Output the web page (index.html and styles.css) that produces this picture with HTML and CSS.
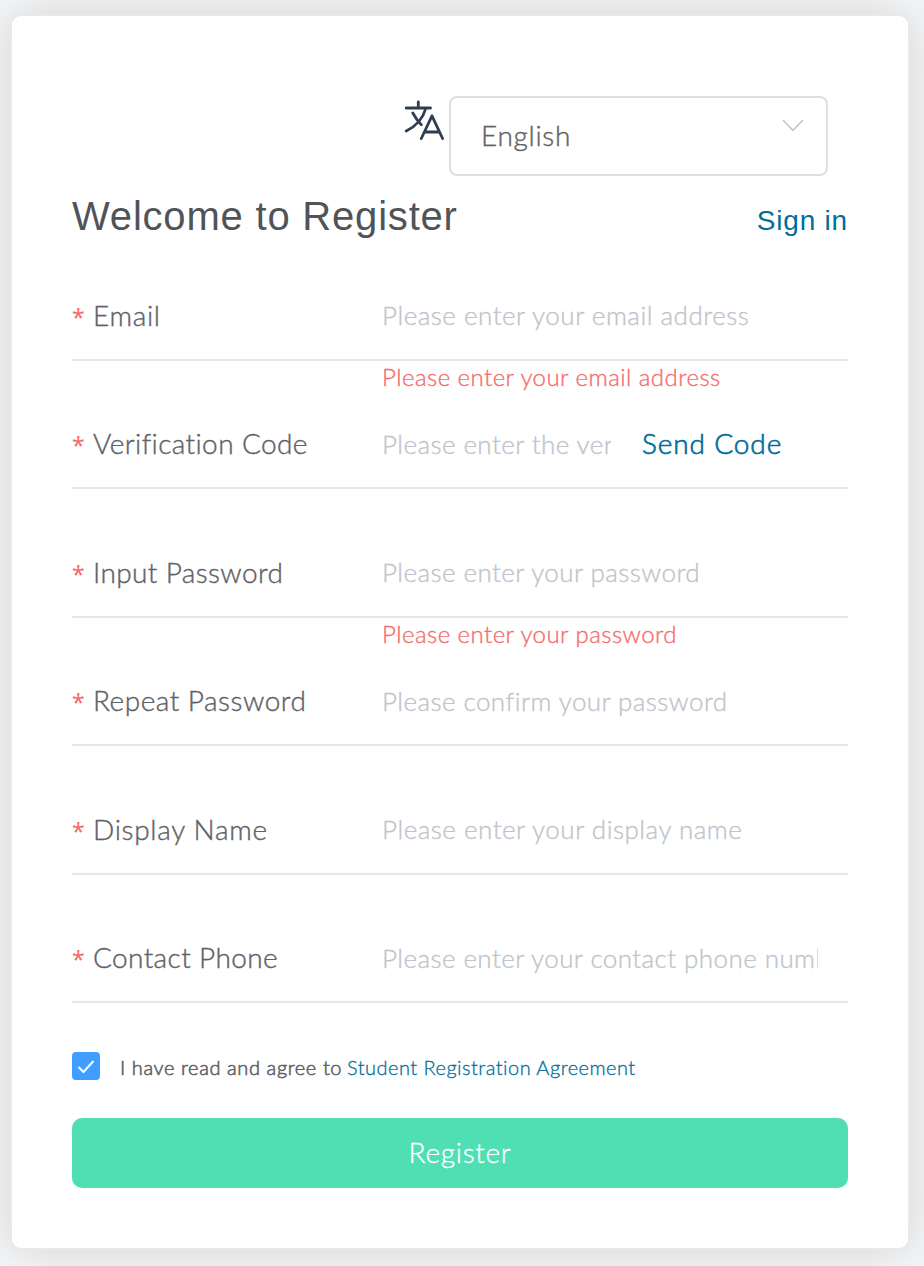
FILE: index.html
```
<!DOCTYPE html>
<html lang="en">
<head>
<meta charset="utf-8">
<title>Register</title>
<link rel="stylesheet" href="styles.css">
</head>
<body>
<main class="card">
  <div class="language">
    <svg class="language-icon" viewBox="0 0 40 40" width="40" height="40"><path d="M2.200 8H26.500M14.300 2V8M21.700 8.500C19 18.500 11.500 26.500 2.200 31M8.800 13C11.500 18 14 21.500 17.300 24.800M17.300 38.500L28 15.800L38.600 38.500M20.500 32H35.500"/></svg>
    <div class="select"><span class="select-value">English</span>
      <svg class="select-arrow" viewBox="0 0 22 13" width="22" height="13"><path d="M1 1L11 11.300L21 1"/></svg>
    </div>
  </div>
  <header class="heading"><h1 class="title">Welcome to Register</h1><a class="signin">Sign in</a></header>
  <form class="form">
    <div class="item"><div class="row"><label class="label email"><span class="star">*</span>Email</label><input class="input" placeholder="Please enter your email address"></div><p class="error">Please enter your email address</p></div>
    <div class="item"><div class="row"><label class="label"><span class="star">*</span>Verification Code</label><input class="input short" placeholder="Please enter the verification code"><a class="send">Send Code</a></div><p class="error"></p></div>
    <div class="item"><div class="row"><label class="label"><span class="star">*</span>Input Password</label><input class="input password" placeholder="Please enter your password"></div><p class="error">Please enter your password</p></div>
    <div class="item"><div class="row"><label class="label repeat"><span class="star">*</span>Repeat Password</label><input class="input password" placeholder="Please confirm your password"></div><p class="error"></p></div>
    <div class="item"><div class="row"><label class="label display"><span class="star">*</span>Display Name</label><input class="input" placeholder="Please enter your display name"></div><p class="error"></p></div>
    <div class="item"><div class="row"><label class="label"><span class="star">*</span>Contact Phone</label><input class="input contact" placeholder="Please enter your contact phone number"></div><p class="error"></p></div>
    <div class="agree"><span class="checkbox"><svg viewBox="0 0 28 28" width="28" height="28"><path d="M6.500 15L11.500 20L21.500 9"/></svg></span><span class="agree-text">I have read and agree to</span><a class="agreement">Student Registration Agreement</a></div>
    <button class="submit" type="button">Register</button>
  </form>
</main>
</body>
</html>
```
FILE: styles.css
```
* { box-sizing: border-box; }
body { margin: 0; padding: 16px 16px 18px 12px; background: #f4f5f6; font-family: Lato, "Open Sans", sans-serif; font-weight: 300; overflow: hidden; }
.card { height: 1232px; padding: 80px 60px 60px; background: #fff; border-radius: 9px; box-shadow: 0 0 0 2px #e9e9e9, 0 0 50px rgba(20,10,0,.15); }
.language { display: flex; justify-content: flex-end; height: 80px; padding-right: 20px; }
.language-icon { margin: 4px 5px 0 0; fill: none; stroke: #2c3e50; stroke-width: 2.8; stroke-linecap: round; stroke-linejoin: round; }
.select { display: flex; justify-content: space-between; width: 379px; height: 80px; padding: 0 22px 0 30px; border: 2px solid #dcdfe6; border-radius: 8px; }
.select-value { line-height: 74px; font-size: 28px; color: #606266; letter-spacing: .7px; -webkit-text-stroke: .4px; }
.select-arrow { margin-top: 21px; fill: none; stroke: #c0c4cc; stroke-width: 1.5; }
.heading { display: flex; justify-content: space-between; height: 95px; font-family: "Liberation Sans", sans-serif; font-weight: 400; }
.title { margin: 0; font-size: 40px; line-height: 46px; padding-top: 17px; font-weight: 400; color: #505458; letter-spacing: .8px; }
.signin { padding-top: 27px; font-size: 28px; line-height: 36px; color: #006e9a; letter-spacing: .8px; }
.item { height: 128.4px; }
.row { display: flex; height: 90px; border-bottom: 2px solid #e6e6e6; }
.label { width: 310px; line-height: 88px; font-size: 28px; color: #606266; letter-spacing: .38px; white-space: nowrap; -webkit-text-stroke: .4px; }
.item:nth-child(even) .label { line-height: 89px; }
.email, .display { letter-spacing: .7px; }
.repeat { letter-spacing: .5px; }
.star { display: inline-block; width: 21px; color: #f56c6c; font-family: "Noto Sans", sans-serif; font-weight: 400; font-size: 23px; line-height: 1; letter-spacing: 0; -webkit-text-stroke: 0; }
.input { width: 436px; height: 88px; padding: 0; border: 0; outline: 0; background: transparent; font: 300 26px Lato, sans-serif; letter-spacing: .5px; color: #606266; -webkit-text-stroke: .35px; }
.item:nth-child(even) .input { padding-top: 2px; }
.input::placeholder { color: #c0c4cc; opacity: 1; }
.input.short { width: 229px; letter-spacing: .42px; }
.input.password { letter-spacing: .43px; }
.input.contact { letter-spacing: .42px; }
.send { margin-left: 31px; line-height: 88px; font-size: 28px; color: #006e9a; letter-spacing: .88px; -webkit-text-stroke: .7px; }
.error { margin: 0 0 0 310px; height: 36px; line-height: 32px; font-size: 24px; color: #f56c6c; letter-spacing: .45px; -webkit-text-stroke: .35px; }
.agree { display: flex; height: 76.6px; padding-top: 10.6px; line-height: 31px; font-size: 20px; }
.checkbox { width: 28px; height: 28px; margin-right: 20px; border-radius: 4px; background: #409eff; }
.checkbox svg { display: block; fill: none; stroke: #fff; stroke-width: 2; }
.agree-text { width: 227px; color: #606266; letter-spacing: .6px; white-space: nowrap; -webkit-text-stroke: .6px; }
.agreement { color: #006e9a; letter-spacing: .48px; -webkit-text-stroke: .3px; }
.submit { display: block; width: 776px; height: 70px; padding: 0 0 2px; border: 0; border-radius: 10px; background: #50deb3; color: #fff; font: 300 28px Lato, sans-serif; letter-spacing: .7px; -webkit-text-stroke: .35px; }
```
